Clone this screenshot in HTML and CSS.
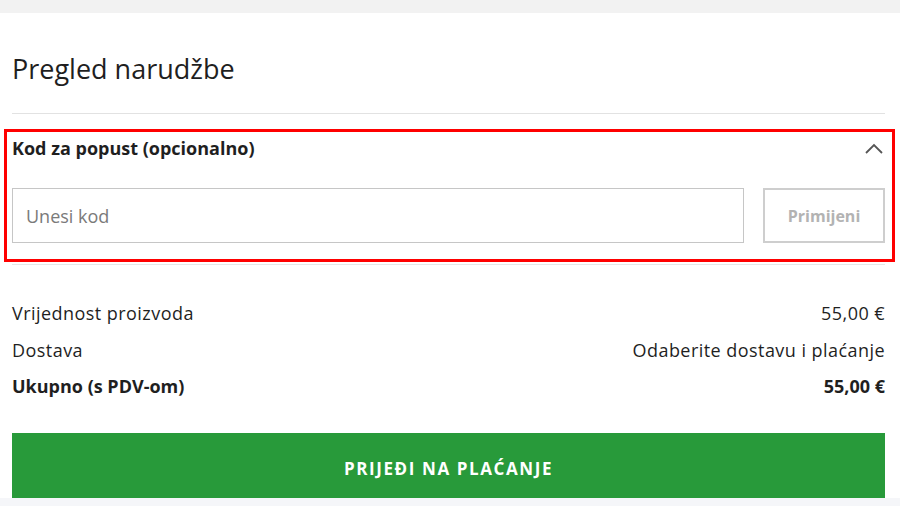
FILE: index.html
```html
<!DOCTYPE html>
<html lang="hr">
<head>
<meta charset="utf-8">
<title>Pregled narudžbe</title>
<link rel="stylesheet" href="styles.css">
</head>
<body>
<div class="topbar"></div>
<main class="summary">
  <h1 class="title">Pregled narudžbe</h1>
  <section class="coupon">
    <div class="coupon-head">
      <span class="coupon-label">Kod za popust (opcionalno)</span>
      <svg class="chevron" width="18" height="11" viewBox="0 0 18 11"><path d="M1 10 L9 2 L17 10" fill="none" stroke="#555" stroke-width="1.8"/></svg>
    </div>
    <div class="coupon-form">
      <input class="coupon-input" type="text" placeholder="Unesi kod">
      <button class="coupon-btn" type="button">Primijeni</button>
    </div>
  </section>
  <div class="totals">
    <div class="row"><span>Vrijednost proizvoda</span><span>55,00 €</span></div>
    <div class="row"><span>Dostava</span><span>Odaberite dostavu i plaćanje</span></div>
    <div class="row total"><span>Ukupno (s PDV-om)</span><span>55,00 €</span></div>
  </div>
  <button class="checkout" type="button">PRIJEĐI NA PLAĆANJE</button>
</main>
<div class="bottombar"></div>
</body>
</html>
```
FILE: styles.css
```css
* { box-sizing: border-box; }
html, body { margin: 0; padding: 0; background: #fff; }
body {
  font-family: "Open Sans", "Noto Sans", sans-serif;
  color: #1f1f1f;
  height: 506px;
  overflow: hidden;
}
.topbar { height: 13px; background: #f2f2f2; }
.summary { padding: 0 15px 0 12px; }
.title {
  margin: 0;
  height: 101px;
  padding-top: 39px;
  font-size: 27px;
  line-height: 34px;
  font-weight: 400;
  border-bottom: 1px solid #e2e2e2;
}
.coupon {
  position: relative;
  padding: 22px 0 21px;
  border-bottom: 1px solid #e6e6e6;
}
.coupon::after {
  content: "";
  position: absolute;
  left: -8px; right: -10px; top: 15px; bottom: 2px;
  border: 3px solid #ff0000;
  pointer-events: none;
}
.coupon-head {
  display: flex;
  justify-content: space-between;
  align-items: center;
  height: 24px;
}
.coupon-label { font-size: 18px; font-weight: 700; }
.chevron { margin-right: 2px; }
.coupon-form {
  display: flex;
  gap: 19px;
  margin-top: 28px;
  height: 55px;
}
.coupon-input {
  flex: 1;
  border: 1px solid #c6c6c6;
  padding: 0 13px;
  font-family: inherit;
  font-size: 18px;
  color: #1f1f1f;
  outline: none;
}
.coupon-input::placeholder { color: #7a7a7a; }
.coupon-btn {
  width: 122px;
  border: 2px solid #cecece;
  background: #fff;
  color: #b3b3b3;
  font-family: inherit;
  font-size: 16px;
  font-weight: 700;
}
.totals { padding-top: 30px; }
.row {
  display: flex;
  justify-content: space-between;
  height: 36.5px;
  line-height: 36px;
  font-size: 18px;
  letter-spacing: 0.45px;
}
.row.total { font-weight: 700; letter-spacing: 0; }
.checkout {
  display: block;
  width: 100%;
  height: 65px;
  margin-top: 28px;
  padding-top: 7px;
  border: 0;
  background: #289a3a;
  color: #fff;
  font-family: inherit;
  font-size: 17px;
  font-weight: 700;
  letter-spacing: 1.6px;
}
.bottombar { height: 8px; background: #f5f6f9; }
```
